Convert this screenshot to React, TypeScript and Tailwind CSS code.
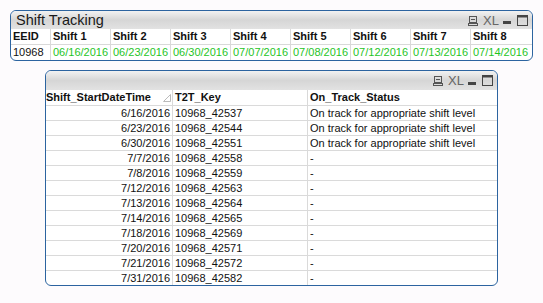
import React from "react";

const font = { fontFamily: '"Liberation Sans", Arial, sans-serif' };

function Icons() {
  return (
    <div className="flex items-center pr-[4px] text-[#555]">
      <svg width="10" height="10" viewBox="0 0 10 10" className="mt-[1px]">
        <rect x="1.5" y="0.5" width="7" height="6" fill="none" stroke="#555" strokeWidth="1" />
        <line x1="3" y1="3.5" x2="7" y2="3.5" stroke="#555" strokeWidth="1" />
        <rect x="0.5" y="7.5" width="9" height="2" fill="none" stroke="#555" strokeWidth="1" />
      </svg>
      <span
        className="ml-[5px] text-[13px] leading-none text-[#666]"
        style={{ fontFamily: '"Liberation Sans Narrow", "Liberation Sans", sans-serif' }}
      >
        XL
      </span>
      <svg width="8" height="10" viewBox="0 0 8 10" className="ml-[4px]">
        <rect x="0" y="6" width="8" height="3" fill="#444" />
      </svg>
      <svg width="11" height="11" viewBox="0 0 11 11" className="ml-[6px]">
        <rect x="0.5" y="0.5" width="10" height="10" fill="none" stroke="#444" strokeWidth="1" />
        <rect x="0.5" y="0.5" width="10" height="2" fill="#444" />
      </svg>
    </div>
  );
}

function Caption({ title, h }: { title?: string; h: string }) {
  return (
    <div
      className={`flex items-center justify-between ${h} bg-gradient-to-b from-[#f2f2f2] via-[#d6d6d6] to-[#e2e2e2] rounded-t-[5px]`}
    >
      <span className="pl-[5px] text-[14.5px] leading-none text-[#1a1a1a]">{title ?? ""}</span>
      <Icons />
    </div>
  );
}

const shifts = [
  "06/16/2016",
  "06/23/2016",
  "06/30/2016",
  "07/07/2016",
  "07/08/2016",
  "07/12/2016",
  "07/13/2016",
  "07/14/2016",
];

const rows: [string, string, string][] = [
  ["6/16/2016", "10968_42537", "On track for appropriate shift level"],
  ["6/23/2016", "10968_42544", "On track for appropriate shift level"],
  ["6/30/2016", "10968_42551", "On track for appropriate shift level"],
  ["7/7/2016", "10968_42558", "-"],
  ["7/8/2016", "10968_42559", "-"],
  ["7/12/2016", "10968_42563", "-"],
  ["7/13/2016", "10968_42564", "-"],
  ["7/14/2016", "10968_42565", "-"],
  ["7/18/2016", "10968_42569", "-"],
  ["7/20/2016", "10968_42571", "-"],
  ["7/21/2016", "10968_42572", "-"],
  ["7/31/2016", "10968_42582", "-"],
];

export default function App() {
  return (
    <div className="w-[543px] h-[303px] bg-[#fdfbfd] text-[11px] text-[#111] overflow-hidden" style={font}>
      {/* Panel 1 */}
      <div className="ml-[10px] mt-[10px] w-[523px] border border-[#2c64a0] rounded-[6px] bg-white overflow-hidden">
        <Caption title="Shift Tracking" h="h-[18px]" />
        <div className="grid grid-cols-[39px_repeat(7,60px)_1fr]">
          <div className="h-[15px] pl-[2px] font-bold leading-[15px]">EEID</div>
          {shifts.map((_, i) => (
            <div key={i} className="h-[15px] pl-[2px] border-l border-[#d9d9d9] font-bold leading-[15px]">
              Shift {i + 1}
            </div>
          ))}
          <div className="h-[16px] pl-[2px] border-t border-[#d9d9d9] leading-[15px]">10968</div>
          {shifts.map((d, i) => (
            <div
              key={i}
              className="h-[16px] pl-[2px] border-l border-t border-[#d9d9d9] leading-[15px] text-[#1fc41f]"
            >
              {d}
            </div>
          ))}
        </div>
      </div>

      {/* Panel 2 */}
      <div className="ml-[45px] mt-[9px] w-[453px] border border-[#2c64a0] rounded-[6px] bg-white overflow-hidden">
        <Caption h="h-[19px]" />
        <div className="grid grid-cols-[126px_135px_1fr]">
          <div className="relative h-[15px] font-bold leading-[15px] whitespace-nowrap">
            Shift_StartDateTime
            <svg width="8" height="8" viewBox="0 0 8 8" className="absolute right-[1px] top-[4px]">
              <path d="M7.5 0.5 L7.5 7.5 L0.5 7.5 Z" fill="none" stroke="#bbb" strokeWidth="1" />
            </svg>
          </div>
          <div className="h-[15px] pl-[2px] border-l border-[#d9d9d9] font-bold leading-[15px]">T2T_Key</div>
          <div className="h-[15px] pl-[2px] border-l border-[#d9d9d9] font-bold leading-[15px]">
            On_Track_Status
          </div>
          {rows.map((r, i) => (
            <React.Fragment key={i}>
              <div className="h-[15px] pr-[2px] border-t border-[#dadada] text-right leading-[14px]">{r[0]}</div>
              <div className="h-[15px] pl-[2px] border-t border-l border-[#dadada] leading-[14px]">{r[1]}</div>
              <div className="h-[15px] pl-[2px] border-t border-l border-[#dadada] leading-[14px]">{r[2]}</div>
            </React.Fragment>
          ))}
        </div>
      </div>
    </div>
  );
}
